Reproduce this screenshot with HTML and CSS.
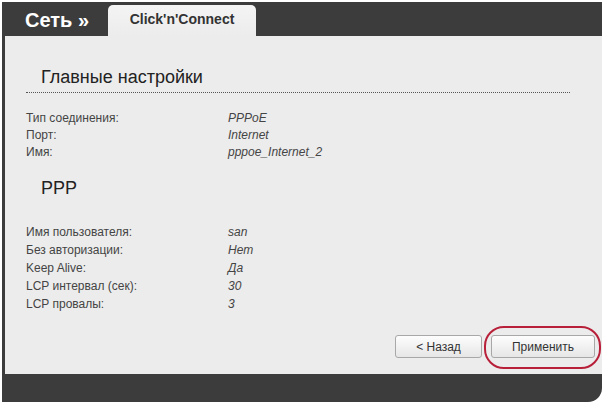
FILE: index.html
```html
<!DOCTYPE html>
<html lang="ru">
<head>
    <meta charset="UTF-8">
    <title>Сеть - Click'n'Connect</title>
    <link rel="stylesheet" href="styles.css">
</head>
<body>
    <div class="frame">
        <div class="header">
            <div class="title">Сеть »</div>
            <div class="tab">Click'n'Connect</div>
        </div>

        <div class="panel">
            <h2>Главные настройки</h2>
            <div class="rows first">
                <div class="row"><span class="label">Тип соединения:</span><span class="value">PPPoE</span></div>
                <div class="row"><span class="label">Порт:</span><span class="value">Internet</span></div>
                <div class="row"><span class="label">Имя:</span><span class="value">pppoe_Internet_2</span></div>
            </div>

            <h3>PPP</h3>
            <div class="rows second">
                <div class="row"><span class="label">Имя пользователя:</span><span class="value">san</span></div>
                <div class="row"><span class="label">Без авторизации:</span><span class="value">Нет</span></div>
                <div class="row"><span class="label">Keep Alive:</span><span class="value">Да</span></div>
                <div class="row"><span class="label">LCP интервал (сек):</span><span class="value">30</span></div>
                <div class="row"><span class="label">LCP провалы:</span><span class="value">3</span></div>
            </div>

            <div class="actions">
                <button class="btn back">&lt; Назад</button>
                <button class="btn apply">Применить<span class="mark"></span></button>
            </div>
        </div>
    </div>
</body>
</html>
```

FILE: styles.css
```css
* {
    margin: 0;
    padding: 0;
    box-sizing: border-box;
    font-family: "Liberation Sans", Arial, sans-serif;
}

body {
    background: #fff;
    width: 602px;
    height: 405px;
    overflow: hidden;
}

.frame {
    margin: 2px 0 0 2px;
    width: 600px;
    background: #3c3c3c;
    padding: 0 0 28px 3px;
    border-radius: 0 0 14px 0;
}

.header {
    height: 34px;
    display: flex;
    align-items: flex-end;
}

.title {
    width: 103px;
    align-self: center;
    padding: 0 0 0 20px;
    color: #fff;
    font-size: 20px;
    font-weight: bold;
    margin-top: 2px;
}

.tab {
    width: 148px;
    height: 31px;
    background: linear-gradient(#f4f4f4, #ececec);
    border-radius: 5px 5px 0 0;
    color: #333;
    font-size: 14px;
    font-weight: bold;
    text-align: center;
    padding-top: 6px;
}

.panel {
    height: 338px;
    background: #ececec;
    padding: 31px 32px 0 21px;
    display: flex;
    flex-direction: column;
}

h2 {
    font-size: 18px;
    font-weight: normal;
    color: #222;
    padding: 0 0 4px 15px;
    border-bottom: 1px dotted #555;
}

h3 {
    font-size: 18px;
    font-weight: normal;
    color: #222;
    padding-left: 15px;
    margin: 17px 0 24px;
}

.rows {
    display: flex;
    flex-direction: column;
    font-size: 12px;
    color: #444;
}

.rows.first {
    margin-top: 17px;
    line-height: 17px;
}

.rows.second {
    line-height: 18px;
}

.row {
    display: flex;
}

.label {
    width: 202px;
}

.value {
    font-style: italic;
}

.actions {
    display: flex;
    justify-content: flex-end;
    gap: 9px;
    margin-top: 22px;
    margin-right: -25px;
}

.btn {
    height: 23px;
    border: 1px solid #a8a8a8;
    border-radius: 3px;
    background: linear-gradient(#fdfdfd, #e6e6e6);
    color: #333;
    font-size: 12px;
    cursor: pointer;
}

.back {
    width: 87px;
}

.apply {
    width: 104px;
    position: relative;
}

.mark {
    position: absolute;
    left: -8px;
    top: -10px;
    width: 117px;
    height: 43px;
    border: 2px solid #b8203a;
    border-radius: 20px;
}
```
